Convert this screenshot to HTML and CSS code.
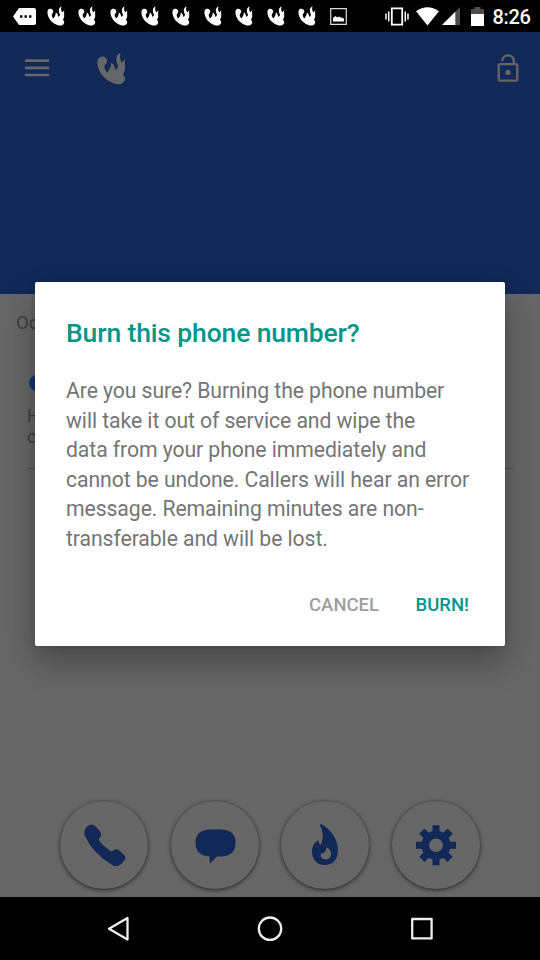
FILE: index.html
```html
<!DOCTYPE html>
<html lang="en">
<head>
<meta charset="utf-8">
<title>Burn this phone number?</title>
<link rel="stylesheet" href="styles.css">
</head>
<body>
<svg class="defs" width="0" height="0">
  <symbol id="burner" viewBox="290 156 86 98">
    <path d="M303 170C310 168 319 174 320 183C320 190 311 195 312 201C313 209 317 214 321 216C325 209 332 203 332 188C342 193 342 201 344 209C349 208 353 203 352 196C346 184 343 164 360 158C356 168 359 178 362 184C364 190 367 184 374 177C371 186 374 197 373 209C372 216 368 220 367 224C374 228 375 235 371 243C367 251 357 253 347 251C318 245 290 216 291 185C291 177 297 171 303 170Z"/>
  </symbol>
</svg>
<div class="screen">
  <div class="status">
    <svg class="more" viewBox="0 0 23 17"><path d="M6 0H21Q23 0 23 2V15Q23 17 21 17H6L0 8.5Z" fill="#fff"/><path d="M7 7.3h2.4v2.4H7zM11.5 7.3h2.4v2.4h-2.4zM16 7.3h2.4v2.4H16z"/></svg>
    <div class="notes">
      <svg><use href="#burner"/></svg><svg><use href="#burner"/></svg><svg><use href="#burner"/></svg><svg><use href="#burner"/></svg><svg><use href="#burner"/></svg><svg><use href="#burner"/></svg><svg><use href="#burner"/></svg><svg><use href="#burner"/></svg><svg><use href="#burner"/></svg>
    </div>
    <svg class="photo" viewBox="0 0 17 17"><path d="M.7.7h15.6v15.6H.7z" fill="none" stroke="#ddd" stroke-width="1.2"/><path d="M3 13.500V10l2.500-2 2 1.500 1.500-1 2 1.300L12 9.500l2 1.200v2.800z" fill="#fff"/></svg>
    <svg class="vibrate" viewBox="0 0 24 19"><path d="M6.800 1.300h10.400v16.400H6.800z" fill="none" stroke="#fff" stroke-width="1.800"/><path d="M3.700 4.500v10M1 6.500v6M20.300 4.500v10M23 6.500v6" stroke="#fff" stroke-width="1.500"/></svg>
    <svg class="wifi" viewBox="0 0 23 19"><path d="M0 4.300Q11.500-4 23 4.300L11.500 18.500Z" fill="#fff"/></svg>
    <svg class="signal" viewBox="0 0 18 18"><path d="M0 18 18 0V18Z" fill="#4d4d4d"/><path d="M0 18 13.300 4.700V18Z" fill="#fff"/></svg>
    <svg class="battery" viewBox="0 0 13 19"><path d="M0 2h3.500V0h6v2H13v5H0z" fill="#4d4d4d"/><path d="M0 7h13v12H0z" fill="#fff"/></svg>
    <span class="clock">8:26</span>
  </div>
  <header class="appbar">
    <svg class="menu" viewBox="0 0 24 32"><path d="M0 8.700h24M0 15.800h24M0 23h24" stroke="#666" stroke-width="2.700"/></svg>
    <svg class="logo"><use href="#burner"/></svg>
    <svg class="lock" viewBox="0 0 22 28"><g fill="none" stroke="#666" stroke-width="2.300"><rect x="1.700" y="10.200" width="18.600" height="16.400" rx="1.200"/><path d="M5.200 7.200C5.400 3.800 7.700 1.300 11 1.300c3.400 0 5.800 2.500 5.800 5.900v3"/></g><circle cx="11" cy="18.400" r="2.600" fill="#666"/></svg>
  </header>
  <main class="content">
    <p class="date">Oc</p>
    <div class="entry">
      <div class="dot"></div>
      <p>H<br>c</p>
    </div>
    <nav class="actions">
      <div class="fab"><svg viewBox="0 0 88 88"><path d="M25 28.500Q27 24 31.500 23.500Q34 23.500 37 27L40 30.500Q42.500 34 39.500 37L38.500 38.500Q42 44.500 51.500 50.500L54 49Q57 47.200 60 50L64 54Q66.800 57 63.500 60.500Q59 66.500 53 64.500Q33 53 25 35Q23.700 31.500 25 28.500Z"/></svg></div>
      <div class="fab"><svg viewBox="0 0 88 88"><path d="M38 28.500H51Q64.500 29.500 64.500 41.500Q64.500 54.500 51 55.500H46L39.500 62.300Q38.600 62.500 38.600 61.500V55.500Q24.500 54.500 24.500 41.500Q24.500 29.500 38 28.500Z"/></svg></div>
      <div class="fab"><svg viewBox="0 0 88 88"><path fill-rule="evenodd" d="M39 24.500C38.300 23.800 39 23 40 23.300C48 26.500 57 37 57 49.500C57 58 52 64 43.500 64C35.500 64 31 58 31 50.500C31 45.500 33.500 41 37.500 39.200Q37.500 42 39.500 44C43 38 42 29.500 39 24.500ZM45.300 46.500Q45.500 52 40 52.500C39 55.500 41.500 58.500 44.500 58.500C48 58.500 50.300 56 50 52.500Q49.500 47.500 45.300 46.500Z"/></svg></div>
      <div class="fab"><svg viewBox="0 0 88 88"><g transform="translate(44 44.300)"><path d="M-3.500-20h7v40h-7zM-20-3.500h40v7h-40z"/><path transform="rotate(45)" d="M-3.700-20h7.400v40h-7.400zM-20-3.700h40v7.400h-40z"/><circle r="14.500"/><circle r="6.800" fill="#666"/></g></svg></div>
    </nav>
  </main>
  <footer class="navbar">
    <svg viewBox="0 0 26 26"><path d="M4 12.700 22.500 2V23.500Z"/></svg>
    <svg viewBox="0 0 26 26"><circle cx="13" cy="12.700" r="11.200"/></svg>
    <svg viewBox="0 0 26 26"><path d="M3.200 3h19.400v19.400H3.200z"/></svg>
  </footer>
  <section class="dialog" role="dialog">
    <h1>Burn this phone number?</h1>
    <p>Are you sure? Burning the phone number<br>will take it out of service and wipe the<br>data from your phone immediately and<br>cannot be undone. Callers will hear an error<br>message. Remaining minutes are non-<br>transferable and will be lost.</p>
    <div class="buttons"><button class="cancel">CANCEL</button><button class="burn">BURN!</button></div>
  </section>
</div>
</body>
</html>
```
FILE: styles.css
```css
* { box-sizing: border-box; }
body, h1, p { margin: 0; }
body { font-family: Roboto, "Liberation Sans", sans-serif; }
svg { display: block; flex: none; }
.defs { position: absolute; }
.screen { position: relative; width: 540px; height: 960px; display: flex; flex-direction: column; overflow: hidden; background: #666; }

.status { height: 32px; padding-left: 12.5px; background: #000; display: flex; align-items: center; }
.more { width: 23px; height: 17px; }
.notes { display: flex; gap: 13.4px; margin-left: 11.3px; }
.notes svg { width: 18px; height: 20px; fill: #fff; }
.photo { width: 17px; height: 17px; margin-left: 13.6px; }
.vibrate { width: 24px; height: 19px; margin-left: 38px; }
.wifi { width: 23px; height: 19px; margin-left: 7.4px; }
.signal { width: 18px; height: 18px; margin-left: 3px; }
.battery { width: 13px; height: 19px; margin-left: 11px; }
.clock { margin-left: 8.6px; padding-top: 2px; font-size: 20px; letter-spacing: -0.3px; font-weight: 500; line-height: 32px; color: #fff; }

.appbar { height: 262px; padding: 20px 21px 0 25px; display: flex; align-items: flex-start; background: #122857; }
.menu { width: 24px; height: 32px; }
.logo { width: 29px; height: 33px; margin-left: 47.5px; fill: #666; }
.lock { width: 22px; height: 28px; margin: 2px 0 0 auto; }

.content { flex: 1; display: flex; flex-direction: column; padding-bottom: 8px; color: #3e3e3e; }
.date { padding: 18px 16px 0; font-size: 18.5px; line-height: 23px; }
.entry { margin: 41px 27px 0; height: 93px; border-bottom: 1px solid #505050; font-size: 18px; line-height: 21px; }
.entry p { margin-top: -1px; }
.dot { width: 16px; height: 16px; margin: -1px 0 15px 2px; border-radius: 50%; background: #163678; }
.actions { margin-top: auto; display: flex; gap: 22.5px; padding-left: 60px; }
.fab { width: 88px; height: 88px; border-radius: 50%; background: #666; box-shadow: 0 1px 4px rgba(0,0,0,.65); }
.fab svg { width: 88px; height: 88px; fill: #122857; }

.navbar { height: 63px; background: #000; display: flex; justify-content: space-between; padding: 18.5px 105px 0; }
.navbar svg { width: 26px; height: 26px; fill: none; stroke: #eee; stroke-width: 2.3; stroke-linejoin: round; }

.dialog { position: absolute; left: 35px; top: 282px; width: 470px; height: 364px; padding: 34px 31px 0; border-radius: 2px; background: #fff; box-shadow: 0 16px 32px rgba(0,0,0,.3), 0 0 5px rgba(0,0,0,.15); }
.dialog h1 { font-size: 26.5px; line-height: 34px; letter-spacing: -0.14px; font-weight: 500; color: #009688; white-space: nowrap; }
.dialog p { margin-top: 26px; font-size: 21.2px; line-height: 29.6px; letter-spacing: -0.08px; color: #757575; white-space: nowrap; }
.buttons { display: flex; justify-content: flex-end; gap: 36.5px; margin-top: 38px; padding-right: 5px; }
.buttons button { padding: 0; border: 0; background: none; font: 500 18.5px/26px Roboto, sans-serif; }
.cancel { color: #9e9e9e; }
.burn { color: #009688; }
```
